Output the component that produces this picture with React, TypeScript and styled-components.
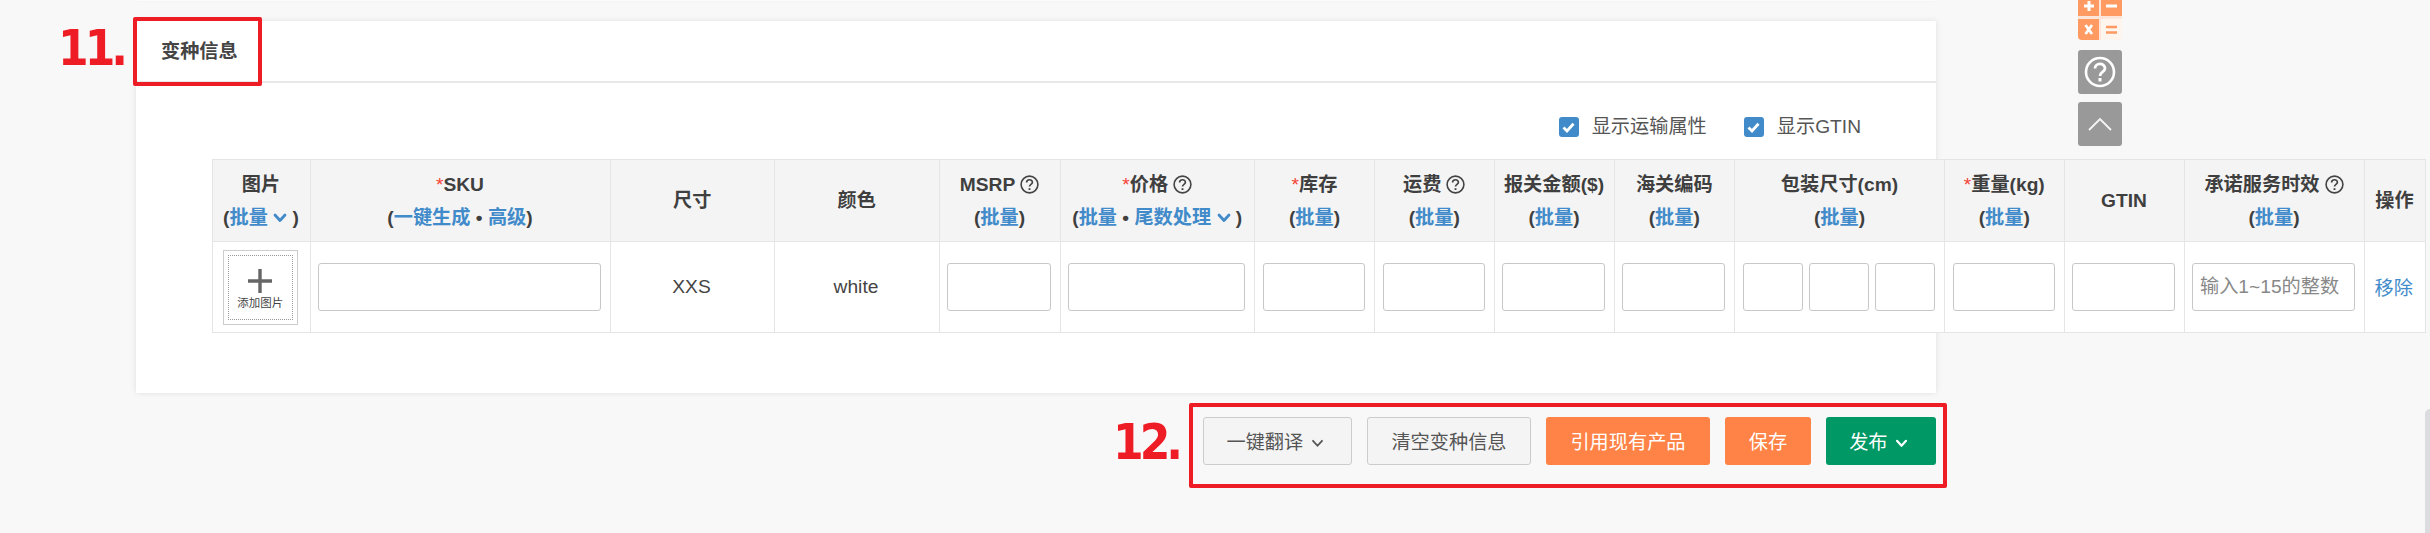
import React from "react";
import styled, { createGlobalStyle } from "styled-components";

const Global = createGlobalStyle`
  html, body { margin: 0; padding: 0; background: #f8f8f8; overflow: hidden; }
  body { font-family: "Liberation Sans", "Noto Sans CJK SC", sans-serif; font-size: 19.2px; color: #444; }
  * { box-sizing: border-box; }
`;

const Page = styled.div`
  position: relative;
  width: 2430px;
  height: 533px;
  padding-left: 136px;
  overflow: hidden;
`;

const PrevCard = styled.div`
  width: 1800px;
  height: 1px;
  margin-bottom: 20px;
  background: #fbfbfb;
  box-shadow: 0 0 4px rgba(0, 0, 0, 0.05);
`;

const Card = styled.section`
  width: 1800px;
  height: 372px;
  background: #fff;
  box-shadow: 0 0 6px rgba(0, 0, 0, 0.1);
`;

const CardHead = styled.header`
  height: 62px;
  padding: 0 0 2px 25px;
  display: flex;
  align-items: center;
  border-bottom: 2px solid #e8e8e8;
  font-weight: 700;
  font-size: 19.2px;
  color: #444;
`;

const Options = styled.div`
  height: 76px;
  display: flex;
  justify-content: flex-end;
  align-items: flex-start;
  gap: 37px;
  padding: 34px 75px 0 0;
`;

const Option = styled.label`
  display: flex;
  align-items: center;
  gap: 13px;
  height: 20px;
  color: #555;
  line-height: 20px;
`;

const Check = styled.span`
  width: 20px;
  height: 20px;
  border-radius: 3px;
  background: #428bca;
  display: flex;
  align-items: center;
  justify-content: center;
`;

const Table = styled.table`
  margin-left: 75.5px;
  width: 2213.5px;
  table-layout: fixed;
  border-collapse: collapse;
  background: #fff;
  position: relative;
`;

const Th = styled.th`
  height: 82px;
  padding: 0;
  background: #f4f4f4;
  border: 1px solid #e5e5e5;
  text-align: center;
  font-weight: 700;
  font-size: 19.2px;
  line-height: 33px;
  color: #3f3f3f;
  white-space: nowrap;
`;

const Td = styled.td`
  height: 91px;
  padding: 0 9px 0 7.5px;
  border: 1px solid #e5e5e5;
  text-align: center;
  color: #444;
  white-space: nowrap;
`;

const Req = styled.span`
  color: #f44336;
  font-weight: 400;
`;

const A = styled.a`
  color: #428bca;
  text-decoration: none;
`;

const HelpSvg = styled.svg`
  vertical-align: -3px;
  margin-left: 5px;
`;

const Chevron = styled.svg`
  vertical-align: 1px;
`;

const BtnChevron = styled(Chevron)`
  margin: 0 5px 0 2px;
`;

const Input = styled.input`
  display: block;
  width: 100%;
  min-width: 0;
  height: 48px;
  border: 1px solid #c8c8c8;
  border-radius: 3px;
  background: #fff;
  padding: 0 7px;
  font: 19.2px "Liberation Sans", "Noto Sans CJK SC", sans-serif;
  outline: none;
  &::placeholder { color: #888; opacity: 1; }
`;

const Triple = styled.div`
  display: flex;
  gap: 6px;
`;

const ImgBox = styled.div`
  width: 75px;
  height: 75px;
  margin: 0 auto;
  border: 1px solid #ccc;
  padding: 4px;
  background: #fff;
`;

const ImgInner = styled.div`
  height: 100%;
  border: 1px dotted #999;
  display: flex;
  flex-direction: column;
  align-items: center;
  padding-top: 13px;
  color: #444;
  font-size: 11.5px;
  line-height: 14px;
  svg { margin-bottom: 3px; }
`;

const Footer = styled.div`
  width: 1800px;
  margin-top: 24px;
  display: flex;
  justify-content: flex-end;
  gap: 15px;
`;

const Btn = styled.button<{ $w: number; $kind: "plain" | "orange" | "green" }>`
  width: ${(p) => p.$w}px;
  height: 48px;
  border-radius: 3px;
  font: 19.2px "Liberation Sans", "Noto Sans CJK SC", sans-serif;
  padding: 0;
  border: 1px solid ${(p) => (p.$kind === "plain" ? "#ccc" : "transparent")};
  background: ${(p) => (p.$kind === "plain" ? "#f4f4f4" : p.$kind === "orange" ? "#ff8346" : "#009966")};
  color: ${(p) => (p.$kind === "plain" ? "#555" : "#fff")};
`;

const Mark = styled.div<{ $x: number; $y: number; $w: number; $h: number }>`
  position: absolute;
  left: ${(p) => p.$x}px;
  top: ${(p) => p.$y}px;
  width: ${(p) => p.$w}px;
  height: ${(p) => p.$h}px;
  border: 4px solid #ee1c25;
  border-radius: 2px;
  pointer-events: none;
`;

const MarkNum = styled.div<{ $x: number; $y: number }>`
  position: absolute;
  left: ${(p) => p.$x}px;
  top: ${(p) => p.$y}px;
  color: #ee1c25;
  font-family: "DejaVu Sans Condensed", "DejaVu Sans", sans-serif;
  font-weight: 700;
  font-size: 49px;
  line-height: 50px;
  letter-spacing: -4px;
`;

const Float = styled.div<{ $y: number }>`
  position: absolute;
  left: 2078px;
  top: ${(p) => p.$y}px;
  width: 44px;
  height: 44px;
  border-radius: 3px;
  background: #999;
  display: flex;
  align-items: center;
  justify-content: center;
`;

const CalcIcon = styled.svg`
  position: absolute;
  left: 2078px;
  top: -5px;
`;

const ScrollThumb = styled.div`
  position: absolute;
  right: 0;
  top: 409px;
  width: 5px;
  height: 124px;
  background: #dcdbe0;
  border-radius: 5px 0 0 0;
`;

const chevPath = (c: string, sw: number) => (
  <path d="M2 2 L7 7.5 L12 2" stroke={c} strokeWidth={sw} strokeLinecap="round" strokeLinejoin="round" />
);

const BlueChev = () => (
  <Chevron width={14} height={10} viewBox="0 0 14 10" fill="none">
    {chevPath("#428bca", 2.8)}
  </Chevron>
);

const ButtonChev = ({ c, sw }: { c: string; sw: number }) => (
  <BtnChevron width={13} height={9} viewBox="0 0 14 10" fill="none">
    {chevPath(c, sw)}
  </BtnChevron>
);

const Batch = () => (
  <>
    (<A>批量</A>)
  </>
);

const Help = () => (
  <HelpSvg width="19" height="19" viewBox="0 0 19 19" fill="none" stroke="#444">
    <circle cx="9.5" cy="9.5" r="8.4" strokeWidth="1.6" />
    <path d="M6.6 7.4 C6.6 3.9 12.4 3.9 12.4 7.3 C12.4 9.4 9.5 9.4 9.5 11.6" strokeWidth="1.7" />
    <path d="M9.5 13.2 V15" strokeWidth="1.9" />
  </HelpSvg>
);

const Tick = () => (
  <svg width="13" height="11" viewBox="0 0 13 11" fill="none">
    <path d="M1.5 5.5 L5 9 L11.5 1.8" stroke="#fff" strokeWidth="2.8" />
  </svg>
);

const cols = [98, 300, 164.5, 164.5, 121, 194.5, 120, 119.5, 120, 120.5, 210, 119.5, 120, 180, 61];

export default function App() {
  return (
    <Page>
      <Global />
      <PrevCard />
      <Card>
        <CardHead>变种信息</CardHead>
        <Options>
          <Option>
            <Check>
              <Tick />
            </Check>
            显示运输属性
          </Option>
          <Option>
            <Check>
              <Tick />
            </Check>
            显示GTIN
          </Option>
        </Options>
        <Table>
          <colgroup>
            {cols.map((w, i) => (
              <col key={i} width={w} />
            ))}
          </colgroup>
          <thead>
            <tr>
              <Th>
                图片
                <br />(<A>批量 <BlueChev /></A> )
              </Th>
              <Th>
                <Req>*</Req>SKU
                <br />(<A>一键生成</A> • <A>高级</A>)
              </Th>
              <Th>尺寸</Th>
              <Th>颜色</Th>
              <Th>
                MSRP
                <Help />
                <br />
                <Batch />
              </Th>
              <Th>
                <Req>*</Req>价格
                <Help />
                <br />(<A>批量</A> • <A>尾数处理 <BlueChev /></A> )
              </Th>
              <Th>
                <Req>*</Req>库存
                <br />
                <Batch />
              </Th>
              <Th>
                运费
                <Help />
                <br />
                <Batch />
              </Th>
              <Th>
                报关金额($)
                <br />
                <Batch />
              </Th>
              <Th>
                海关编码
                <br />
                <Batch />
              </Th>
              <Th>
                包装尺寸(cm)
                <br />
                <Batch />
              </Th>
              <Th>
                <Req>*</Req>重量(kg)
                <br />
                <Batch />
              </Th>
              <Th>GTIN</Th>
              <Th>
                承诺服务时效
                <Help />
                <br />
                <Batch />
              </Th>
              <Th>操作</Th>
            </tr>
          </thead>
          <tbody>
            <tr>
              <Td>
                <ImgBox>
                  <ImgInner>
                    <svg width="24" height="24" viewBox="0 0 24 24">
                      <path d="M12 0 V24 M0 12 H24" stroke="#666" strokeWidth="3.4" />
                    </svg>
                    添加图片
                  </ImgInner>
                </ImgBox>
              </Td>
              <Td>
                <Input />
              </Td>
              <Td>XXS</Td>
              <Td>white</Td>
              <Td>
                <Input />
              </Td>
              <Td>
                <Input />
              </Td>
              <Td>
                <Input />
              </Td>
              <Td>
                <Input />
              </Td>
              <Td>
                <Input />
              </Td>
              <Td>
                <Input />
              </Td>
              <Td>
                <Triple>
                  <Input />
                  <Input />
                  <Input />
                </Triple>
              </Td>
              <Td>
                <Input />
              </Td>
              <Td>
                <Input />
              </Td>
              <Td>
                <Input placeholder="输入1~15的整数" />
              </Td>
              <Td>
                <A>移除</A>
              </Td>
            </tr>
          </tbody>
        </Table>
      </Card>
      <Footer>
        <Btn $w={149} $kind="plain">
          一键翻译 <ButtonChev c="#555" sw={2} />
        </Btn>
        <Btn $w={164} $kind="plain">
          清空变种信息
        </Btn>
        <Btn $w={164} $kind="orange">
          引用现有产品
        </Btn>
        <Btn $w={86} $kind="orange">
          保存
        </Btn>
        <Btn $w={110} $kind="green">
          发布 <ButtonChev c="#fff" sw={2.4} />
        </Btn>
      </Footer>

      <Mark $x={133} $y={17} $w={129} $h={69} />
      <MarkNum $x={58} $y={24}>11.</MarkNum>
      <Mark $x={1189} $y={403} $w={758} $h={85} />
      <MarkNum $x={1113} $y={418}>12.</MarkNum>

      <CalcIcon width="44" height="45" viewBox="0 0 44 45">
        <rect width="44" height="45" rx="4" fill="#fde6d9" />
        <rect x="0" y="0" width="21" height="21" fill="#ff9a63" />
        <rect x="23" y="0" width="21" height="21" fill="#ff9a63" />
        <path d="M0 24 H21 V45 H4 Q0 45 0 41 Z" fill="#ff9a63" />
        <path d="M23 24 H44 V41 Q44 45 40 45 H23 Z" fill="#fff5ef" />
        <path d="M6 11 H16 M11 6 V16 M28 11 H39" stroke="#fff" strokeWidth="3" />
        <path d="M7.5 30 L14 39 M14 30 L7.5 39" stroke="#fff" strokeWidth="2.8" />
        <path d="M28 32 H39 M28 37.5 H39" stroke="#ff9a63" strokeWidth="2.4" />
      </CalcIcon>
      <Float $y={50}>
        <svg width="32" height="32" viewBox="0 0 32 32" fill="none" stroke="#fff">
          <circle cx="16" cy="16" r="14" strokeWidth="2.6" />
          <path d="M11 12.5 C11 6.5 21 6.5 21 12.3 C21 16 16 16 16 20" strokeWidth="2.8" />
          <path d="M16 22 V25.5" strokeWidth="3" />
        </svg>
      </Float>
      <Float $y={102}>
        <svg width="28" height="16" viewBox="0 0 28 16" fill="none">
          <path d="M3 14 L14 3 L25 14" stroke="#f5f5f5" strokeWidth="1.8" />
        </svg>
      </Float>
      <ScrollThumb />
    </Page>
  );
}
